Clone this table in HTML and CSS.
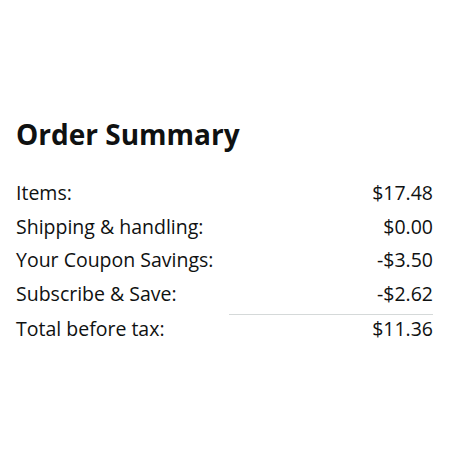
FILE: index.html
```html
<!DOCTYPE html>
<html>
<head>
<meta charset="utf-8">
<link rel="stylesheet" href="styles.css">
</head>
<body>
<div class="summary">
  <h1 class="title">Order Summary</h1>
  <div class="rows">
    <div class="row"><span>Items:</span><span>$17.48</span></div>
    <div class="row"><span>Shipping &amp; handling:</span><span>$0.00</span></div>
    <div class="row"><span>Your Coupon Savings:</span><span>-$3.50</span></div>
    <div class="row"><span>Subscribe &amp; Save:</span><span>-$2.62</span></div>
    <div class="divider"></div>
    <div class="row"><span>Total before tax:</span><span>$11.36</span></div>
  </div>
</div>
</body>
</html>
```
FILE: styles.css
```css
html, body {
  margin: 0;
  padding: 0;
  background: #fff;
}
body {
  font-family: "Open Sans", "Noto Sans", sans-serif;
  color: #0f1111;
}
.summary {
  padding: 114px 17px 0 16px;
}
.title {
  margin: 0 0 22px 0;
  font-size: 28px;
  font-weight: 700;
  line-height: 40px;
}
.rows {
  display: flex;
  flex-direction: column;
}
.row {
  display: flex;
  justify-content: space-between;
  font-size: 19.5px;
  line-height: 33.6px;
}
.divider {
  height: 1px;
  background: #d5d9d9;
  margin: 4px 0 -3px 213px;
}
```
